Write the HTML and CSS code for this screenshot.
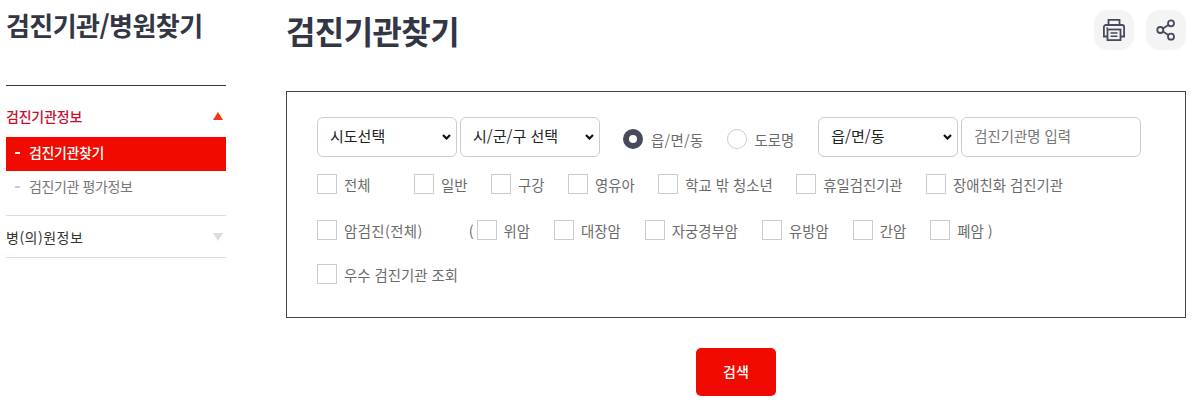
FILE: index.html
```html
<!DOCTYPE html>
<html lang="ko">
<head>
  <meta charset="UTF-8" />
  <title>검진기관찾기</title>
  <link rel="stylesheet" href="styles.css">
</head>
<body>
  <div class="container">
    <div class="side">
      <h2>검진기관/병원찾기</h2>
      <ul class="menu">
        <li class="menu-item open">
          <a href="#" class="menu-title">검진기관정보<span class="arrow up"></span></a>
          <ul class="sub">
            <li class="on"><a href="#">검진기관찾기</a></li>
            <li><a href="#">검진기관 평가정보</a></li>
          </ul>
        </li>
        <li class="menu-item">
          <a href="#" class="menu-title">병(의)원정보<span class="arrow down"></span></a>
        </li>
      </ul>
    </div>
    <div class="main">
      <div class="top">
        <h1>검진기관찾기</h1>
        <div class="tools">
          <button class="tool" aria-label="인쇄">
            <svg width="24" height="24" viewBox="0 0 24 24" fill="none" stroke="#454a5c" stroke-width="1.800">
              <path d="M6.500 7V1.900h11V7"/>
              <path d="M5 18.500H1.900V9a2 2 0 0 1 2-2h16.200a2 2 0 0 1 2 2v9.500H19"/>
              <rect x="5.500" y="11.500" width="13" height="10.600" fill="#f4f4f5"/>
              <path d="M8.500 15h7M8.500 18.300h7" stroke-width="1.400"/>
              <path d="M4.500 10h1.500" stroke-width="1.400"/>
            </svg>
          </button>
          <button class="tool" aria-label="공유">
            <svg width="24" height="24" viewBox="0 0 24 24" fill="none" stroke="#454a5c" stroke-width="1.800">
              <circle cx="17" cy="5.300" r="3"/>
              <circle cx="6.300" cy="12" r="3"/>
              <circle cx="17" cy="18.700" r="3"/>
              <path d="M8.900 10.400l5.500-3.500M8.900 13.600l5.500 3.500"/>
            </svg>
          </button>
        </div>
      </div>

      <div class="search-box">
        <div class="row-top">
          <select class="sel"><option>시도선택</option></select>
          <select class="sel"><option>시/군/구 선택</option></select>
          <label class="radio first"><input type="radio" name="addr" checked><span>읍/면/동</span></label>
          <label class="radio"><input type="radio" name="addr"><span>도로명</span></label>
          <select class="sel"><option>읍/면/동</option></select>
          <input type="text" class="name-input" placeholder="검진기관명 입력" />
        </div>
        <div class="row row-1">
          <label class="chk all"><input type="checkbox"><span>전체</span></label>
          <label class="chk"><input type="checkbox"><span>일반</span></label>
          <label class="chk"><input type="checkbox"><span>구강</span></label>
          <label class="chk"><input type="checkbox"><span>영유아</span></label>
          <label class="chk"><input type="checkbox"><span>학교 밖 청소년</span></label>
          <label class="chk"><input type="checkbox"><span>휴일검진기관</span></label>
          <label class="chk"><input type="checkbox"><span>장애친화 검진기관</span></label>
        </div>
        <div class="row row-2">
          <label class="chk cancer"><input type="checkbox"><span>암검진(전체)</span></label>
          <span class="paren">(</span>
          <label class="chk"><input type="checkbox"><span>위암</span></label>
          <label class="chk"><input type="checkbox"><span>대장암</span></label>
          <label class="chk"><input type="checkbox"><span>자궁경부암</span></label>
          <label class="chk"><input type="checkbox"><span>유방암</span></label>
          <label class="chk"><input type="checkbox"><span>간암</span></label>
          <label class="chk"><input type="checkbox"><span>폐암 )</span></label>
        </div>
        <div class="row row-3">
          <label class="chk"><input type="checkbox"><span>우수 검진기관 조회</span></label>
        </div>
      </div>

      <div class="btn-wrap">
        <button class="search-btn">검색</button>
      </div>
    </div>
  </div>
</body>
</html>
```
FILE: styles.css
```css
* {
  box-sizing: border-box;
}

body {
  margin: 0;
  font-family: "Noto Sans CJK KR", "Noto Sans", sans-serif;
  font-size: 14px;
  color: #6b6b6b;
  background-color: #fff;
}

a {
  color: inherit;
  text-decoration: none;
}

ul {
  list-style: none;
  margin: 0;
  padding: 0;
}

.container {
  display: flex;
  padding-left: 6px;
}

/* left menu */
.side {
  width: 220px;
  margin-right: 60px;
}

.side h2 {
  margin: 0;
  height: 86px;
  padding-top: 6px;
  font-size: 26px;
  line-height: 38px;
  font-weight: 700;
  letter-spacing: -0.55px;
  color: #333644;
  border-bottom: 1px solid #333644;
}

.menu-item {
  border-bottom: 1px solid #ddd;
}

.menu-item.open {
  padding-bottom: 10px;
}

.menu-title {
  display: flex;
  justify-content: space-between;
  align-items: center;
  height: 41px;
  padding-right: 3px;
  color: #333;
  letter-spacing: 0.5px;
}

.open .menu-title {
  height: 51px;
  padding-top: 9px;
  color: #c8102e;
  font-weight: 500;
  letter-spacing: -0.2px;
}

.arrow {
  width: 0;
  height: 0;
  border-left: 5.500px solid transparent;
  border-right: 5.500px solid transparent;
}

.arrow.up {
  border-bottom: 8px solid #f5361b;
}

.arrow.down {
  border-top: 8px solid #ddd;
}

.sub li a {
  display: block;
  height: 34px;
  line-height: 30px;
  padding-left: 23px;
  position: relative;
  letter-spacing: -0.4px;
  color: #777;
}

.sub li a::before {
  content: "";
  position: absolute;
  left: 9px;
  top: 15px;
  width: 5px;
  height: 2px;
  background-color: #ccc;
}

.sub li.on a {
  background-color: #f00a00;
  color: #fff;
  font-weight: 500;
}

.sub li.on a::before {
  background-color: #fff;
}

/* content */
.main {
  width: 900px;
}

.top {
  display: flex;
  justify-content: space-between;
  height: 91px;
  padding-top: 10px;
}

.top h1 {
  margin: 0;
  font-size: 32px;
  line-height: 40px;
  font-weight: 700;
  letter-spacing: -0.6px;
  color: #333644;
}

.tools {
  display: flex;
  gap: 12px;
}

.tool {
  width: 40px;
  height: 40px;
  padding: 0;
  border: none;
  border-radius: 14px;
  background-color: #f4f4f5;
  display: flex;
  align-items: center;
  justify-content: center;
}

.search-box {
  height: 227px;
  border: 1px solid #444;
  padding: 25px 30px 0;
  font-size: 14.400px;
}

.row-top {
  display: flex;
  align-items: center;
  height: 40px;
}

.sel {
  appearance: none;
  width: 140px;
  height: 40px;
  padding: 0 0 3px 12px;
  margin-right: 3px;
  border: 1px solid #ccc;
  border-radius: 6px;
  background: #fff url("data:image/svg+xml,%3Csvg xmlns='http://www.w3.org/2000/svg' width='9' height='6'%3E%3Cpath d='M1 1l3.500 3.500L8 1' fill='none' stroke='%23111' stroke-width='2.200'/%3E%3C/svg%3E") no-repeat right 5px center;
  font-family: inherit;
  font-size: 15px;
  color: #222;
}

.radio {
  display: flex;
  align-items: center;
  margin-top: 4px;
  margin-right: 24px;
}

.radio.first {
  margin-left: 20px;
  margin-right: 23px;
}

.radio input {
  appearance: none;
  width: 20px;
  height: 20px;
  margin: 0 8px 0 0;
  border: 1px solid #ccc;
  border-radius: 50%;
  background-color: #fff;
}

.radio input:checked {
  border: 6px solid #454a5c;
}

.radio.first span {
  letter-spacing: 0.3px;
}

.name-input {
  width: 180px;
  height: 40px;
  padding: 0 12px 3px;
  border: 1px solid #ccc;
  border-radius: 6px;
  font-family: inherit;
  font-size: 14.400px;
}

.name-input::placeholder {
  color: #777;
}

.row {
  display: flex;
  align-items: center;
  gap: 23.500px;
  height: 20px;
}

.row-1 {
  margin-top: 17px;
}

.row-2 {
  margin-top: 26px;
  gap: 24px;
}

.row-3 {
  margin-top: 24px;
}

.chk {
  display: flex;
  align-items: center;
}

.chk input {
  appearance: none;
  width: 20px;
  height: 20px;
  margin: 0 7px 0 0;
  border: 1px solid #ccc;
  background-color: #fff;
}

.chk.all {
  margin-right: 20px;
}

.chk.cancer {
  margin-right: 22px;
}

.chk.cancer span {
  letter-spacing: 0.4px;
}

.paren {
  margin-right: -21px;
}

.btn-wrap {
  display: flex;
  justify-content: center;
  margin-top: 30px;
}

.search-btn {
  width: 80px;
  height: 48px;
  padding: 0 0 2px;
  border: none;
  border-radius: 5px;
  background-color: #f00a00;
  color: #fff;
  font-family: inherit;
  font-size: 14px;
  font-weight: 500;
}
```
